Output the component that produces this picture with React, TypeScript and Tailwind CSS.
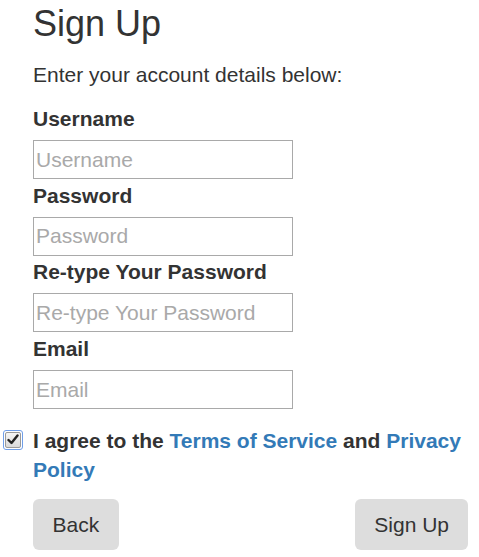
import React from "react";

function Field({ label, placeholder, type = "text" }: { label: string; placeholder: string; type?: string }) {
  return (
    <div>
      <div className="font-bold leading-[29.71px] pt-[1.5px] mb-[6.5px]">{label}</div>
      <input
        type={type}
        placeholder={placeholder}
        className="block w-[260px] h-[39px] border border-[#a9a9a9] px-[2px] text-[21px] text-[#333] placeholder:text-[#a9a9a9] outline-none bg-white"
      />
    </div>
  );
}

export default function App() {
  return (
    <div className="bg-white min-h-[557px] font-['Liberation_Sans',Arial,sans-serif] text-[#333] text-[21px] leading-[29.71px] pl-[33px] pr-[11px] pt-[5px]">
      <h1 className="text-[36px] leading-[37.4px] font-normal">Sign Up</h1>
      <p className="mt-[18px] mb-[12.2px]">Enter your account details below:</p>
      <Field label="Username" placeholder="Username" />
      <Field label="Password" placeholder="Password" type="password" />
      <Field label="Re-type Your Password" placeholder="Re-type Your Password" type="password" />
      <Field label="Email" placeholder="Email" type="email" />
      <div className="flex items-start ml-[-30px] mt-[16.5px]">
        <div className="mt-[4px] w-[20px] h-[20px] shrink-0 rounded-[3px] border border-[#6f9ee8] p-[1px]">
          <div className="w-full h-full rounded-[2px] border border-[#9a9a9a] bg-gradient-to-b from-[#f6f6f6] to-[#d9d9d9] flex items-center justify-center">
            <svg width="12" height="11" viewBox="0 0 12 11">
              <path d="M1.5 6 L4.5 9 L10.5 1.5" fill="none" stroke="#222" strokeWidth="2.4" strokeLinecap="round" strokeLinejoin="round" />
            </svg>
          </div>
        </div>
        <div className="ml-[10px] font-bold leading-[29.71px]">
          I agree to the <a className="text-[#337ab7]" href="#">Terms of Service</a> and{" "}
          <a className="text-[#337ab7]" href="#">Privacy Policy</a>
        </div>
      </div>
      <div className="flex justify-between mt-[14.1px]">
        <button className="bg-[#dddddd] rounded-[6px] px-[19.5px] py-[10.6px] leading-[29.71px] text-[#333]">Back</button>
        <button className="bg-[#dddddd] rounded-[6px] px-[19px] py-[10.6px] leading-[29.71px] text-[#333]">Sign Up</button>
      </div>
    </div>
  );
}
